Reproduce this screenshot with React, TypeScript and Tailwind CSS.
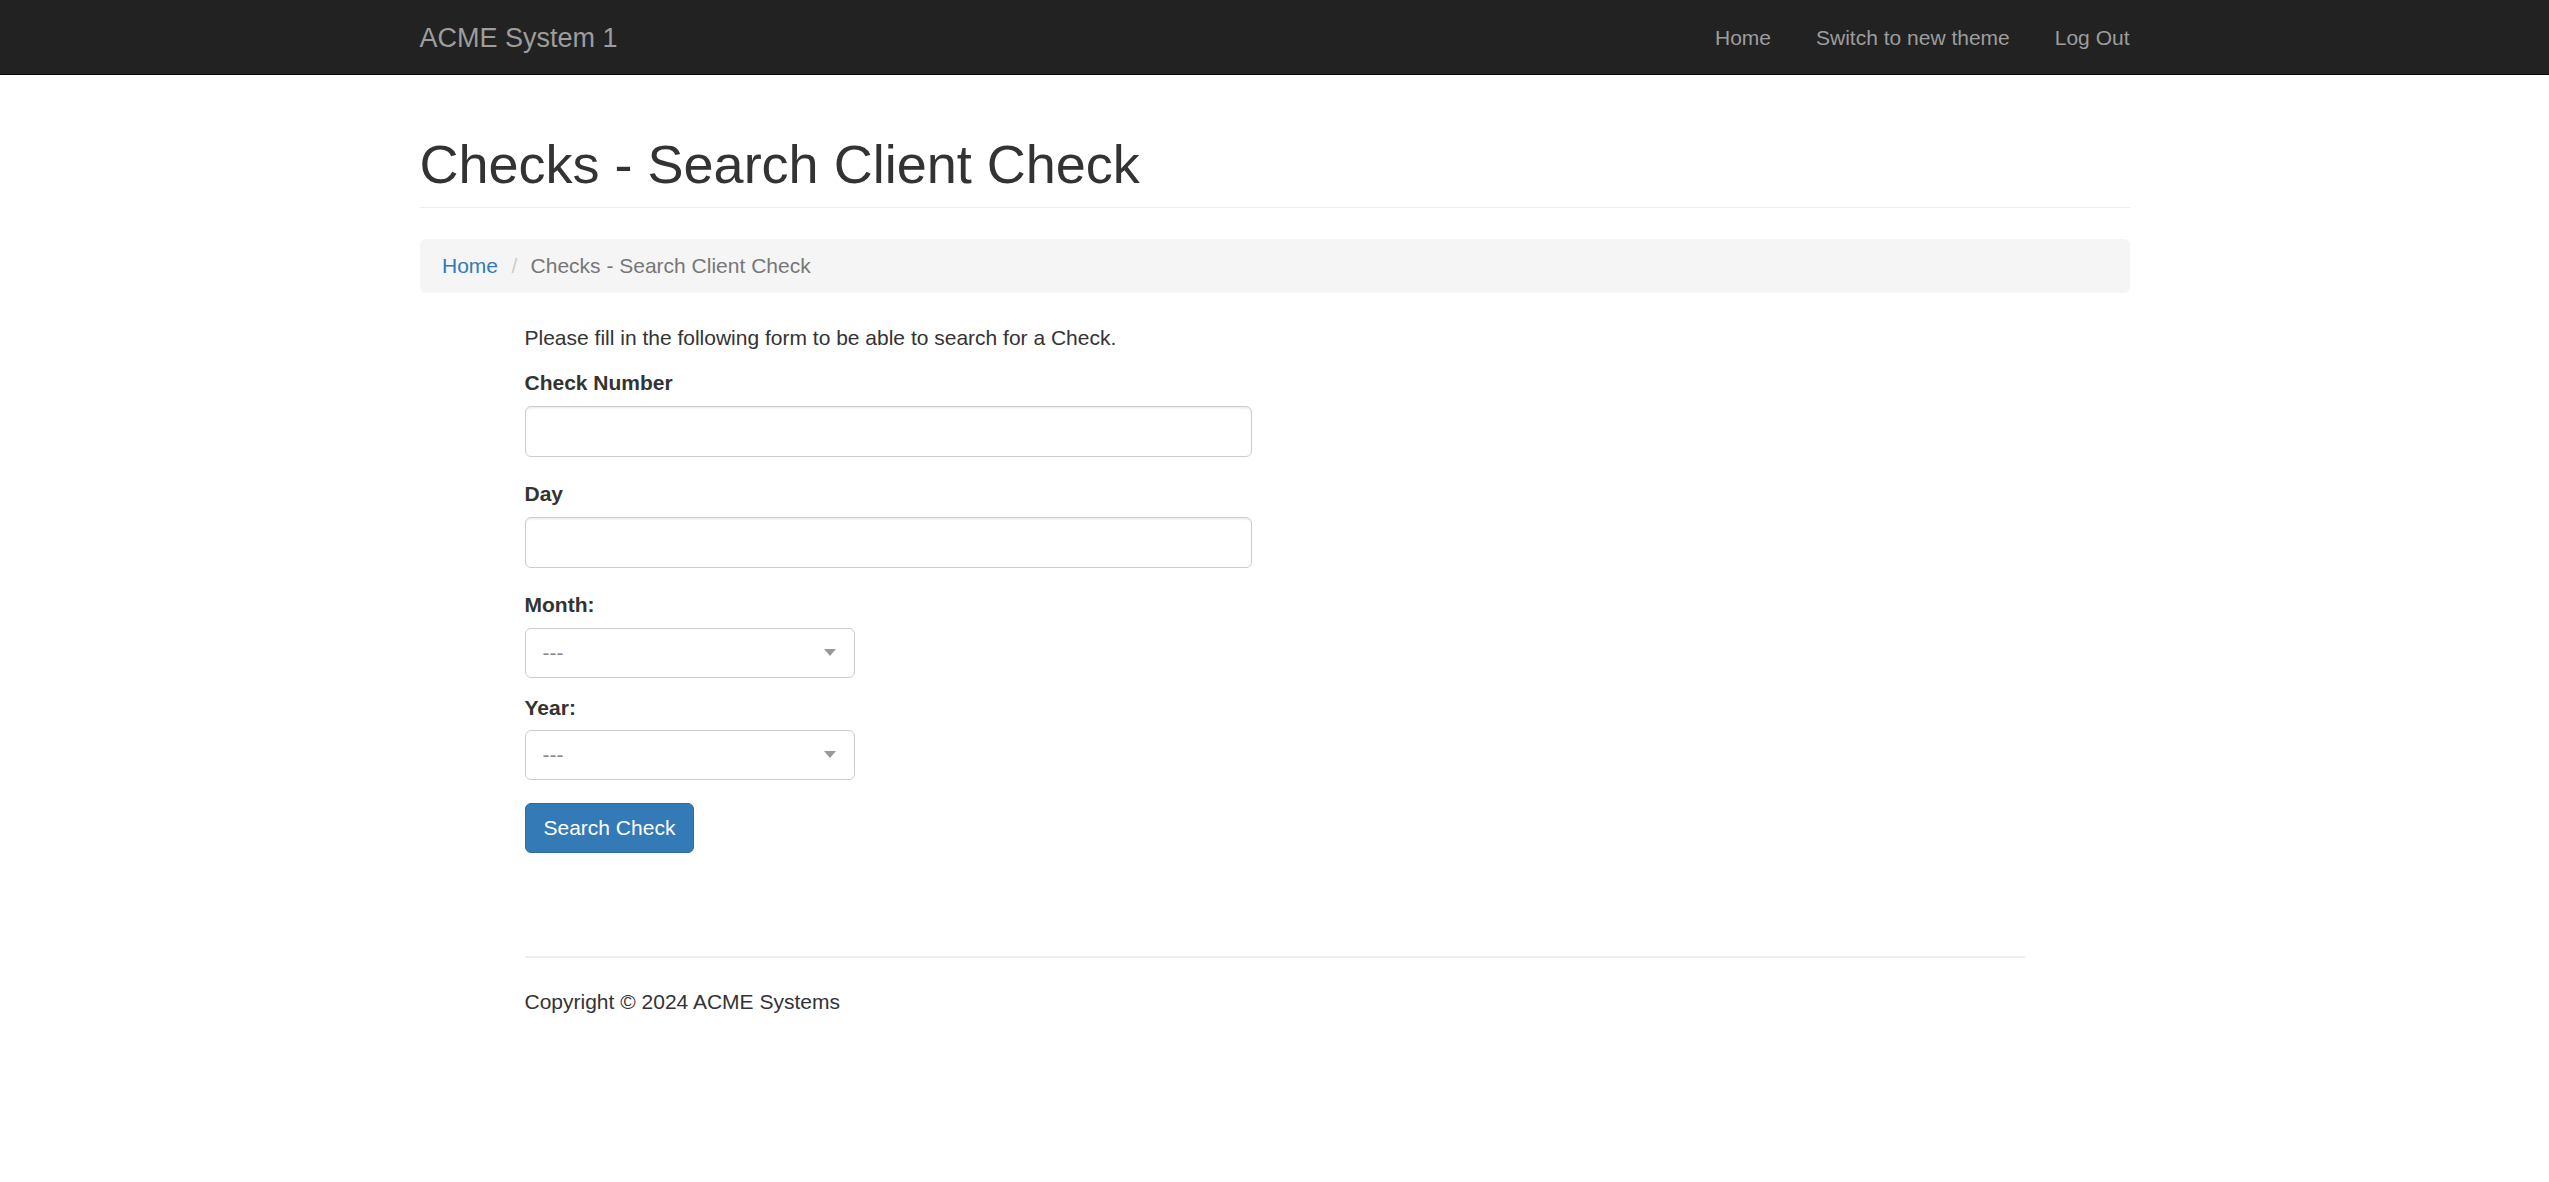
import React from "react";

function FakeSelect() {
  return (
    <div className="relative h-[50px] w-[330px] rounded-[6px] border border-[#ccc] bg-white">
      <span className="block pl-[17px] leading-[48px] text-[#888]">---</span>
      <span className="absolute right-[18px] top-[20px] h-0 w-0 border-x-[6px] border-t-[7.5px] border-x-transparent border-t-[#999]" />
    </div>
  );
}

export default function App() {
  const links = ["Home", "Switch to new theme", "Log Out"];
  return (
    <div className="min-h-[1182px] bg-white font-['Liberation_Sans',Arial,Helvetica,sans-serif] text-[21px] leading-[30px] text-[#333]">
      <nav className="h-[75px] border-b border-[#080808] bg-[#222]">
        <div className="mx-auto flex w-[1710px] items-start justify-between">
          <a className="block pt-[22.5px] text-[27px] leading-[30px] text-[#9d9d9d]">ACME System 1</a>
          <ul className="-mr-[22.5px] flex">
            {links.map((l) => (
              <li key={l}>
                <a className="block px-[22.5px] pt-[22.5px] text-[21px] leading-[30px] text-[#9d9d9d]">{l}</a>
              </li>
            ))}
          </ul>
        </div>
      </nav>

      <div className="mx-auto w-[1710px]">
        <div className="mt-[59.5px] border-b border-[#eee] pb-[13.5px]">
          <h1 className="text-[54px] font-normal leading-[59.4px] text-[#333]">Checks - Search Client Check</h1>
        </div>
        <ol className="mb-[30px] mt-[31px] flex rounded-[6px] bg-[#f5f5f5] px-[22.5px] py-[12px]">
          <li>
            <a className="text-[#337ab7]">Home</a>
          </li>
          <li className="whitespace-pre text-[#777]">
            {" "}
            <span className="px-[7.5px] text-[#ccc]">{"/\u00a0"}</span>
            {"Checks - Search Client Check"}
          </li>
        </ol>
      </div>

      <div className="mx-auto w-[1500px]">
        <p className="mb-[15px]">Please fill in the following form to be able to search for a Check.</p>

        <div className="mb-[22.5px]">
          <label className="mb-[7.5px] block w-fit font-bold">Check Number</label>
          <input
            type="text"
            className="block h-[51px] w-[727px] rounded-[6px] border border-[#ccc] bg-white px-[18px] shadow-[inset_0_1.5px_1.5px_rgba(0,0,0,0.075)] outline-none"
          />
        </div>

        <div className="mb-[22.5px]">
          <label className="mb-[7.5px] block w-fit font-bold">Day</label>
          <input
            type="text"
            className="block h-[51px] w-[727px] rounded-[6px] border border-[#ccc] bg-white px-[18px] shadow-[inset_0_1.5px_1.5px_rgba(0,0,0,0.075)] outline-none"
          />
        </div>

        <div className="mb-[15px]">
          <label className="mb-[7.5px] block w-fit font-bold">Month:</label>
          <FakeSelect />
        </div>

        <div className="mb-[22.5px]">
          <label className="mb-[7.5px] block w-fit font-bold">Year:</label>
          <FakeSelect />
        </div>

        <button className="h-[50px] rounded-[6px] border border-[#2e6da4] bg-[#337ab7] px-[18px] text-[21px] leading-[30px] text-white">
          Search Check
        </button>

        <hr className="mt-[103px] border-0 border-t-2 border-[#eee]" />
        <p className="mt-[29px]">Copyright © 2024 ACME Systems</p>
      </div>
    </div>
  );
}
